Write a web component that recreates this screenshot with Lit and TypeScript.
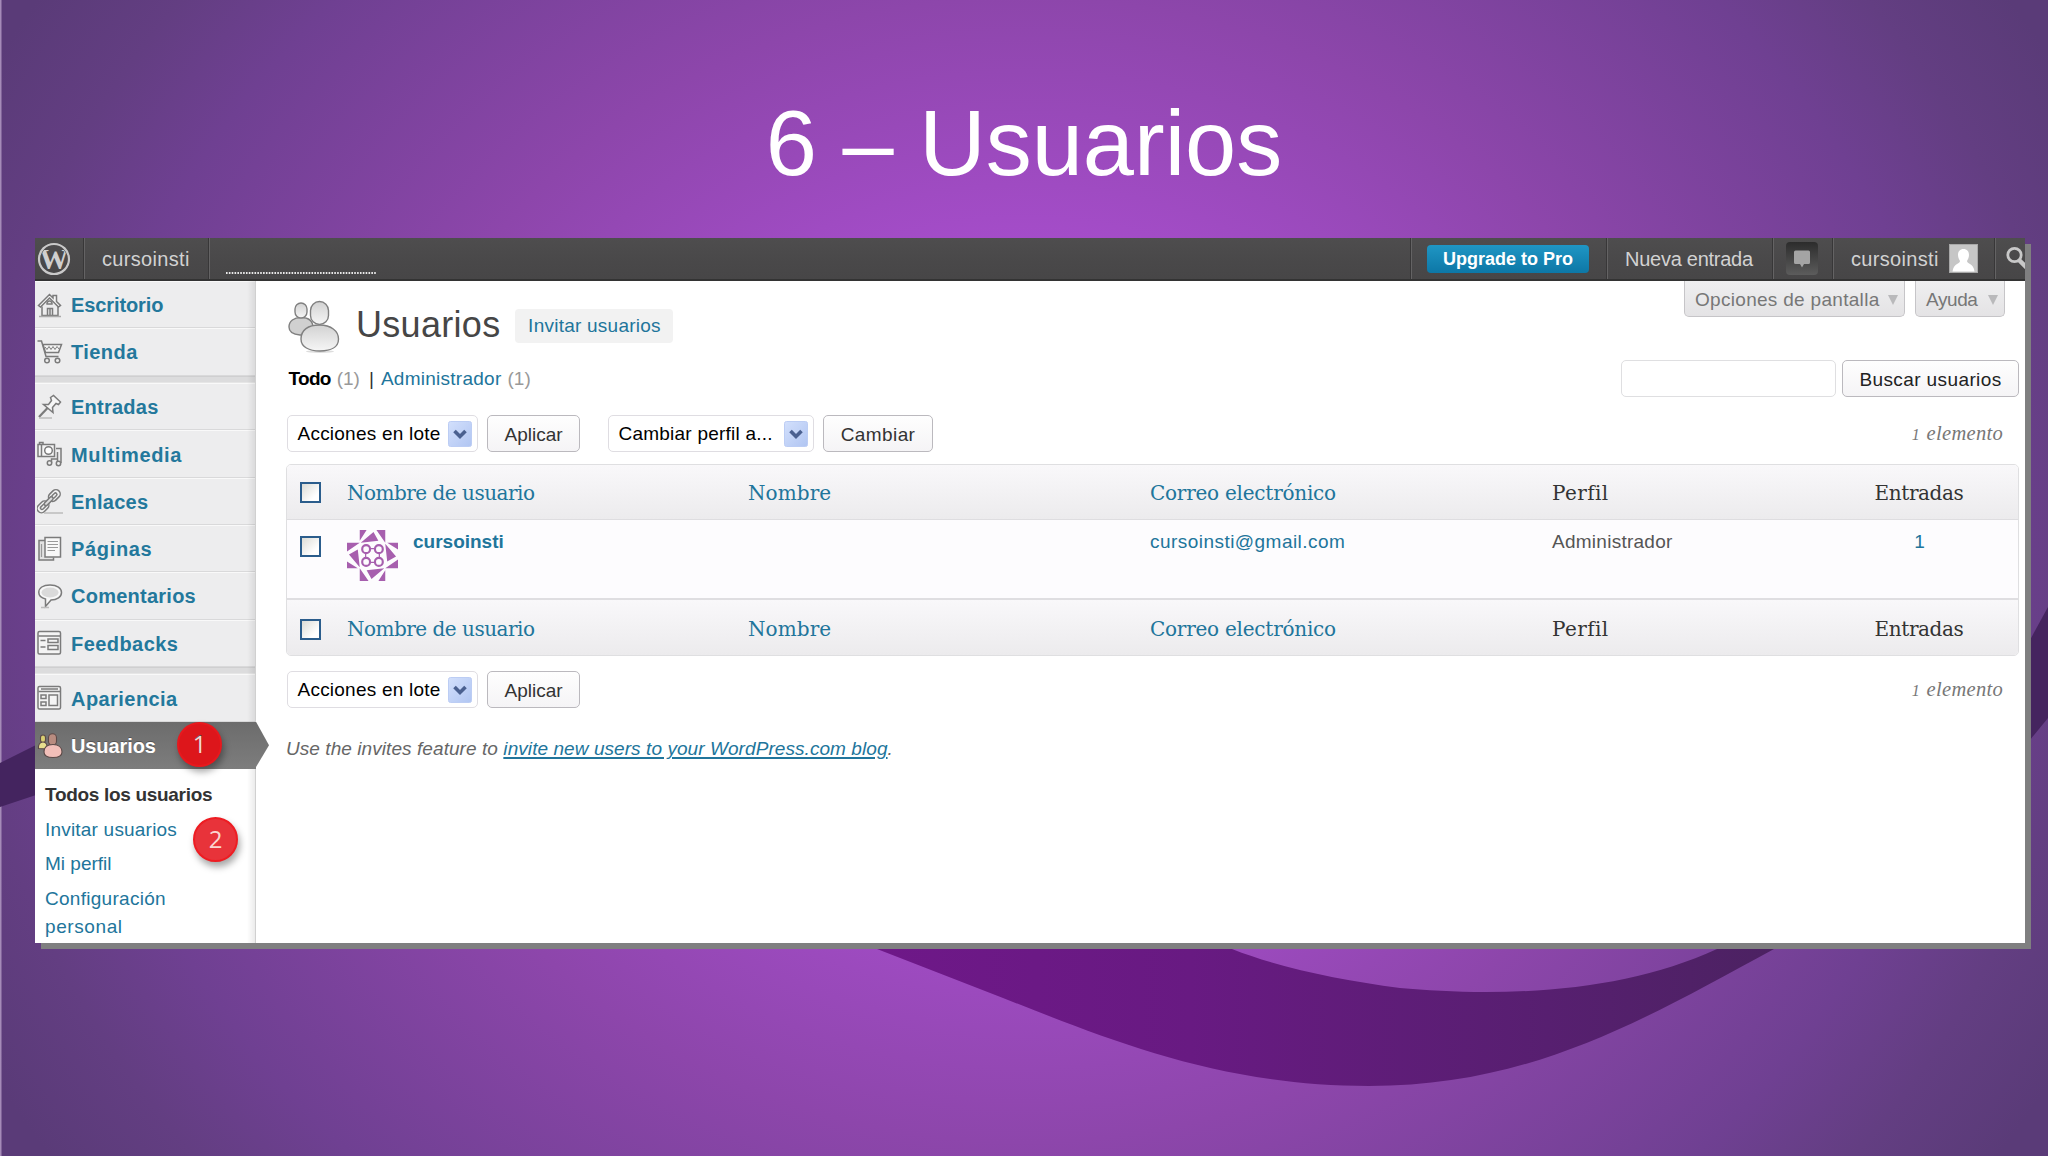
import { LitElement, html, css, svg, nothing } from "lit";
import { customElement, property } from "lit/decorators.js";

const ICONS: Record<string, unknown> = {
  home: svg`<path d="M1.5 13.5 L12.5 2.5 L16 6 V3.5 H19.5 V9.5 L23.5 13.5 L21.5 15 L12.5 6 L3.5 15 Z" fill="#f6f6f6"/><path d="M5 14.5 V23.5 H21 V14.5"/><path d="M10.5 23.5 V16.5 H15.5 V23.5 M13 17 V23"/><path d="M12.5 9 a2.5 2.5 0 0 1 2.5 3 h-5 a2.5 2.5 0 0 1 2.5 -3 Z"/><path d="M2 24.5 H24" stroke="#aaa"/>`,
  cart: svg`<path d="M0.5 2 H4.5 L9 17.5 H21.5"/><path d="M6 5.5 H24.5 L21.5 13.5 H8.5 Z" fill="#f4f4f4"/><path d="M8 8 L10 10.500 L12 7.500 L14 10.500 L16 7.500 L18 10.500 L20 7.500 L22 10" stroke-width="1"/><circle cx="10" cy="21.5" r="2.3" fill="#eee"/><circle cx="20.5" cy="21.5" r="2.3" fill="#eee"/>`,
  pin: svg`<path d="M13.5 3.5 L16.5 1.5 L23.5 8 L21.5 10.5 L19 9.5 L15.5 13.5 L16 18.5 L6.500 10.5 L11.500 10.500 L14.500 6.500 Z" fill="#f6f6f6"/><path d="M10.500 14 L2 23" stroke-width="2.200"/><path d="M2 24 H15" stroke="#bbb"/>`,
  media: svg`<rect x="1" y="3.500" width="16.500" height="12" fill="#f4f4f4"/><path d="M2.500 3.500 V1.500 H6 V3.500 M4.500 4 V15"/><circle cx="11.500" cy="9.500" r="3.800" fill="#fff"/><path d="M19 7.500 H24 V22 M14.500 22 V18 H20.500 M20.500 22 V11"/><circle cx="12.500" cy="22" r="2.200" fill="#eee"/><circle cx="21.500" cy="22.500" r="2.200" fill="#eee"/>`,
  link: svg`<g transform="rotate(-45 11.500 13)"><rect x="-3" y="9" width="13" height="8.500" rx="4.200" fill="#f2f2f2"/><rect x="0.500" y="11.800" width="6" height="3" rx="1.500"/><rect x="13" y="9" width="13" height="8.500" rx="4.200" fill="#f2f2f2"/><rect x="16.500" y="11.800" width="6" height="3" rx="1.500"/><rect x="6" y="11.500" width="11" height="3.500" rx="1.700" fill="#ddd"/></g><path d="M7 25 H26" stroke="#bbb"/>`,
  pages: svg`<path d="M8 4.500 H2 V24 H16.500 V21.500" fill="#e2e2e2"/><rect x="8" y="1.500" width="15.500" height="19.500" fill="#f8f8f8"/><path d="M10.500 5.500 H21 M10.500 8.500 H21 M10.500 11.500 H21 M10.500 14.500 H18 M4.500 8 V21" stroke="#999" stroke-width="1.200"/>`,
  comment: svg`<path d="M13 2 C20 2 24.500 5 24.500 9.500 C24.500 14 20 17 14 17 L8.500 23.500 L8.500 16 C4.500 15 1.800 12.800 1.800 9.500 C1.800 5 6 2 13 2 Z" fill="#f8f8f8"/><ellipse cx="13" cy="9.500" rx="8.500" ry="5" fill="#dadada" stroke="none"/><path d="M4 24.500 H12" stroke="#bbb"/>`,
  feedback: svg`<rect x="1" y="1.500" width="22.500" height="22.500" rx="1.500" fill="#f4f4f4"/><path d="M1.500 6 H23"/><path d="M3.500 10.500 H8.500 M3.500 17 H8.500"/><rect x="11" y="9" width="10" height="3.500"/><rect x="11" y="15.500" width="10" height="4"/>`,
  layout: svg`<rect x="1" y="1.500" width="22.500" height="22.500" rx="1.500" fill="#f4f4f4"/><path d="M1.500 6.500 H23 M4 4 H21" stroke-width="1.300"/><rect x="4" y="10" width="5" height="3.500"/><rect x="4" y="17" width="5" height="3.500"/><rect x="12" y="10" width="8.500" height="10.500"/>`,
  users: svg`<g stroke="#5c4a48" stroke-width="1.100"><rect x="3.500" y="2" width="5" height="7.500" rx="2.500" fill="#d9cf72"/><path d="M1.500 15.500 C1 11.500 3 9 6 9 C9.500 9 10.500 12 10 16 Z" fill="#e8df8e"/><rect x="11.500" y="0.800" width="8" height="11.500" rx="4" fill="#b98c80"/><path d="M7 19 C7 14 10.500 11.500 16 11.500 C21.500 11.500 25 14.500 25 19 C25 22.500 21.500 24.500 16 24.500 C10.500 24.500 7 22.500 7 19 Z" fill="#f2bfb9"/></g>`,
};

type Item = { icon: string; label: string; cls: string };
const MENU: Item[][] = [
  [
    { icon: "home", label: "Escritorio", cls: "s0" },
    { icon: "cart", label: "Tienda", cls: "s4" },
  ],
  [
    { icon: "pin", label: "Entradas", cls: "s2" },
    { icon: "media", label: "Multimedia", cls: "s6" },
    { icon: "link", label: "Enlaces", cls: "s2" },
    { icon: "pages", label: "Páginas", cls: "s6" },
    { icon: "comment", label: "Comentarios", cls: "s2" },
    { icon: "feedback", label: "Feedbacks", cls: "s4" },
  ],
  [{ icon: "layout", label: "Apariencia", cls: "s4" }],
];

@customElement("slide-backdrop")
class SlideBackdrop extends LitElement {
  static styles = css`
    :host { display: block; }
    svg { display: block; }
  `;
  render() {
    return html`<svg width="2048" height="1156" viewBox="0 0 2048 1156">
      <defs>
        <radialGradient id="bg" gradientUnits="userSpaceOnUse" cx="0" cy="0" r="1" gradientTransform="translate(1024 570) scale(1180 1040)">
          <stop offset="0" stop-color="#ad50d4" />
          <stop offset="0.3" stop-color="#a64dcb" />
          <stop offset="0.55" stop-color="#8d46ab" />
          <stop offset="0.8" stop-color="#6f4092" />
          <stop offset="0.9" stop-color="#633e82" />
          <stop offset="1" stop-color="#5a3b78" />
        </radialGradient>
        <linearGradient id="rib" gradientUnits="userSpaceOnUse" x1="880" y1="0" x2="1770" y2="0">
          <stop offset="0" stop-color="#6e1888" />
          <stop offset="0.35" stop-color="#681a82" />
          <stop offset="0.75" stop-color="#571f70" />
          <stop offset="1" stop-color="#4c2262" />
        </linearGradient>
      </defs>
      <rect width="2048" height="1156" fill="url(#bg)" />
      <rect width="1.500" height="1156" fill="#a58bb8" />
      <path fill="url(#rib)" d="M841 935 L877 949 L1003 998 C1110 1040 1220 1086 1369 1086 C1530 1086 1640 1022 1774 949 L1790 938 L1735 938 L1717 949 C1650 980 1570 992 1486 992 C1455 992 1425 990 1400 988 C1340 980 1280 968 1232 949 L1200 938 Z" />
      <path fill="#44245f" d="M0 763 L36 745 V795 L0 807 Z" />
      <path fill="#45245f" d="M2030 640 L2048 607 V718 L2030 740 Z" />
    </svg>`;
  }
}

@customElement("admin-bar")
class AdminBar extends LitElement {
  static styles = css`
    :host { display: block; }
    .bar {
      box-sizing: border-box; height: 43px; display: flex; align-items: stretch; overflow: hidden;
      background: linear-gradient(#4e4d4e, #494849 60%, #474647); border-bottom: 2px solid #333;
      color: #d2d2d2; font: 20px/41px "Liberation Sans", sans-serif; white-space: nowrap;
    }
    .cell { box-sizing: border-box; flex: none; display: flex; align-items: center; border-left: 1px solid #383738; box-shadow: inset 1px 0 0 #646364; }
    .cell.site, .cell.new { padding-top: 2px; }
    .logo { width: 48px; padding-left: 2px; display: flex; align-items: center; box-sizing: border-box; flex: none; }
    .site { width: 125px; padding-left: 18px; letter-spacing: 0.33px; }
    .stats { width: 1202px; padding-left: 17px; align-items: flex-end; }
    .dots { margin-bottom: 5px; }
    .up { width: 196px; padding-left: 16px; }
    .pro {
      box-sizing: border-box; width: 162px; height: 28px; text-align: center; border-radius: 4px; color: #fff;
      font: bold 18px/29px "Liberation Sans", sans-serif; background: linear-gradient(#1f96c4, #0d77a6);
    }
    .new { width: 166px; padding-left: 18px; letter-spacing: -0.26px; }
    .note { width: 60px; padding-left: 13px; }
    .me { width: 162px; padding-left: 18px; gap: 10px; letter-spacing: 0.33px; }
    .me span { padding-top: 2px; }
    .find { width: 34px; padding-left: 10px; }
    svg { display: block; flex: none; }
  `;
  render() {
    return html`<div class="bar">
      <div class="logo">
        <svg width="34" height="34" viewBox="0 0 34 34">
          <defs><clipPath id="disc"><circle cx="17" cy="17" r="13.300" /></clipPath></defs>
          <circle cx="17" cy="17" r="15" fill="none" stroke="#c9c9c9" stroke-width="2.200" />
          <text x="17" y="27" text-anchor="middle" font-family="Liberation Serif, serif" font-weight="bold" font-size="29" fill="#cfcfcf" clip-path="url(#disc)">W</text>
        </svg>
      </div>
      <div class="cell site">cursoinsti</div>
      <div class="cell stats">
        <svg class="dots" width="150" height="2" viewBox="0 0 150 2"><path d="M0 1 H150" stroke="#e8e8e8" stroke-width="2" stroke-dasharray="1.600 1.250" /></svg>
      </div>
      <div class="cell up"><div class="pro">Upgrade to Pro</div></div>
      <div class="cell new">Nueva entrada</div>
      <div class="cell note">
        <svg width="32" height="33" viewBox="0 0 32 33">
          <defs><linearGradient id="nb" x1="0" y1="0" x2="0" y2="1"><stop offset="0" stop-color="#2c2c2c" /><stop offset="1" stop-color="#5c5c5c" /></linearGradient></defs>
          <rect width="32" height="33" rx="4" fill="url(#nb)" />
          <path d="M9.500 8.500 H22.500 Q24 8.500 24 10 V20.500 Q24 22 22.500 22 H18 L16 25.500 L14 22 H9.500 Q8 22 8 20.500 V10 Q8 8.500 9.500 8.500 Z" fill="#a4a4a4" />
        </svg>
      </div>
      <div class="cell me">
        <span>cursoinsti</span>
        <svg width="29" height="29" viewBox="0 0 29 29">
          <rect x="0.500" y="0.500" width="28" height="28" fill="#c6c6c6" stroke="#a8a8a8" />
          <path d="M14.500 5 C18 5 20 7.500 20 11 C20 14 18.500 16 18 17 C18 20 24.500 19 25.500 27.500 H3.500 C4.500 19 11 20 11 17 C10.500 16 9 14 9 11 C9 7.500 11 5 14.500 5 Z" fill="#fff" />
        </svg>
      </div>
      <div class="cell find">
        <svg width="26" height="26" viewBox="0 0 26 26" fill="none" stroke="#c8c8c8">
          <circle cx="9.500" cy="9" r="6.700" stroke-width="2.800" /><path d="M14 14 L21.500 21.500" stroke-width="4.500" />
        </svg>
      </div>
    </div>`;
  }
}

@customElement("side-menu")
class SideMenu extends LitElement {
  static styles = css`
    :host { display: block; width: 221px; flex: none; }
    .side { position: relative; height: 100%; background: #ededee; display: flex; flex-direction: column; font-family: "Liberation Sans", sans-serif; }
    .edge { position: absolute; top: 0; right: 0; bottom: 0; width: 9px; background: linear-gradient(90deg, rgba(0,0,0,0), rgba(0,0,0,0.08)); border-right: 1px solid #d0d0d0; box-sizing: border-box; }
    .item {
      box-sizing: border-box; height: 47.300px; display: flex; align-items: center; gap: 7.500px; padding: 1px 0 0 1.500px;
      border-top: 1px solid #f9f9f9; border-bottom: 1px solid #d9d9da; color: #23789c; font-weight: bold; font-size: 20px; line-height: 24px;
    }
    .item svg { flex: none; fill: none; stroke: #7b7b7b; stroke-width: 1.500; }
    .gap { height: 7.500px; flex: none; box-sizing: border-box; background: #dcdcdd; border-top: 1px solid #cfcfd0; border-bottom: 1px solid #e6e6e6; }
    .s0 { letter-spacing: -0.1px; }
    .s2 { letter-spacing: 0.25px; }
    .s4 { letter-spacing: 0.44px; }
    .s6 { letter-spacing: 0.66px; }
    .current { position: relative; z-index: 1; background: linear-gradient(#6c6c6c, #7d7d7d); border: 0; padding-top: 2px; color: #fff; text-shadow: 0 -1px 0 #555; }
    .arrow { position: absolute; left: 221px; top: 0; width: 13px; height: 100%; background: linear-gradient(#6c6c6c, #7d7d7d); clip-path: polygon(0 0, 100% 50%, 0 96%); }
    .badge {
      position: absolute; z-index: 2; width: 45px; height: 45px; box-sizing: border-box; border-radius: 50%; background: #dd161b; border: 2px solid #e8181d;
      color: #fbd5d0; font: 24px/40px "Open Sans", sans-serif; text-align: center; box-shadow: 2px 5px 7px rgba(0,0,0,0.35);
    }
    .one { left: 142px; top: 0; }
    .two { left: 158px; top: 536px; background: #e8333a; border-color: #ee1c22; }
    .sub { flex: 1; background: #fff; padding: 12px 0 0 10px; display: flex; flex-direction: column; gap: 6.700px; color: #21759b; font-size: 19px; line-height: 28px; }
    .all { color: #333; font-weight: bold; letter-spacing: -0.31px; }
    .inv { letter-spacing: 0.2px; }
    .conf { letter-spacing: 0.28px; }
    .pers { letter-spacing: 0.6px; }
  `;
  row(i: Item) {
    return html`<div class="item"><svg width="27" height="27" viewBox="0 0 27 27">${ICONS[i.icon]}</svg><span class="${i.cls}">${i.label}</span></div>`;
  }
  render() {
    return html`<div class="side">
      ${MENU.map((g, n) => html`${n ? html`<div class="gap"></div>` : nothing}${g.map((i) => this.row(i))}`)}
      <div class="item current">
        <svg width="27" height="27" viewBox="0 0 27 27">${ICONS.users}</svg><span class="s0">Usuarios</span>
        <div class="arrow"></div>
        <div class="badge one">1</div>
      </div>
      <div class="sub">
        <div class="all">Todos los usuarios</div>
        <div class="inv">Invitar usuarios</div>
        <div>Mi perfil</div>
        <div><div class="conf">Configuración</div><div class="pers">personal</div></div>
      </div>
      <div class="badge two">2</div>
      <div class="edge"></div>
    </div>`;
  }
}

@customElement("select-box")
class SelectBox extends LitElement {
  @property() label = "";
  static styles = css`
    :host { display: block; }
    .box {
      box-sizing: border-box; height: 37px; border: 1.500px solid #dfdde2; border-radius: 5px; background: #fff; color: #000;
      display: flex; align-items: center; justify-content: space-between; padding: 0 5px 0 9.500px;
      font: 19px/22px "Liberation Sans", sans-serif; letter-spacing: 0.23px; white-space: nowrap;
    }
    svg { display: block; }
  `;
  render() {
    return html`<div class="box"><span>${this.label}</span>
      <svg width="24" height="26" viewBox="0 0 24 26">
        <defs><linearGradient id="g" x1="0" y1="0" x2="1" y2="1"><stop offset="0" stop-color="#d3e0fc" /><stop offset="1" stop-color="#b0c5f2" /></linearGradient></defs>
        <rect x="0.500" y="0.500" width="23" height="25" rx="2" fill="url(#g)" stroke="#bccdf4" />
        <path d="M6.500 10 L12 15.500 L17.500 10" fill="none" stroke="#4a6090" stroke-width="3.600" />
      </svg></div>`;
  }
}

const rot = (n: number) => `rotate(${n * 90} 26 26)`;

@customElement("users-screen")
class UsersScreen extends LitElement {
  static styles = css`
    :host { display: block; flex: 1; min-width: 0; }
    .main { box-sizing: border-box; padding: 0 6px 0 30px; font: 19px/22px "Liberation Sans", sans-serif; color: #555; white-space: nowrap; }
    .top { height: 79px; display: flex; justify-content: space-between; align-items: flex-start; padding-right: 14px; }
    .heading { display: flex; align-items: center; padding: 19px 0 0 1px; height: 53px; }
    .title { margin: 0 0 3px 16px; font: 36px/42px "Liberation Sans", sans-serif; letter-spacing: 0.3px; color: #464646; }
    .invite { box-sizing: border-box; width: 158px; height: 34px; margin: 0 0 2px 15px; text-align: center; border-radius: 4px; background: #f2f2f2; color: #21759b; line-height: 34px; letter-spacing: 0.24px; }
    .tabs { display: flex; gap: 10px; }
    .tab {
      box-sizing: border-box; height: 36px; border: 1.500px solid #c6c5c8; border-top: 0; border-radius: 0 0 5px 5px; background: linear-gradient(#efeff0, #e4e3e5);
      color: #777; display: flex; align-items: center; justify-content: space-between; padding: 2px 6px 0 10px; letter-spacing: 0.3px;
    }
    .wide { width: 221px; }
    .help { width: 90px; letter-spacing: -0.4px; }
    .tri { width: 0; height: 0; border: 5.500px solid transparent; border-top: 10px solid #b9b9bb; border-bottom: 0; }
    .row { height: 37px; display: flex; align-items: center; justify-content: space-between; }
    .filters { display: flex; padding-left: 2.500px; }
    .todo { color: #000; font-weight: bold; letter-spacing: -0.7px; }
    .count { color: #999; margin-left: 6px; }
    .bar { color: #333; margin: 0 7px 0 9px; }
    .link { color: #21759b; }
    .admin { letter-spacing: 0.26px; }
    .search { display: flex; gap: 6px; }
    .input { box-sizing: border-box; width: 215px; height: 37px; border: 1.500px solid #dfdfe1; border-radius: 5px; background: #fff; }
    .button {
      box-sizing: border-box; height: 37px; border: 1.500px solid #bbb9be; border-radius: 5px; background: linear-gradient(#fefefe, #f5f4f6);
      color: #333; text-align: center; line-height: 37px;
    }
    .b-search { width: 177px; letter-spacing: 0.4px; color: #222; }
    .b-apply { width: 93px; }
    .b-change { width: 110px; letter-spacing: 0.42px; }
    .nav { margin-top: 18px; padding-right: 16px; }
    .actions { display: flex; gap: 9px; padding-left: 1px; }
    .sel1 { width: 191px; }
    .sel2 { width: 206px; margin-left: 19px; }
    .total { font: italic 20.500px/22px "Liberation Serif", serif; color: #777; letter-spacing: 0.3px; }
    .old { font-size: 16px; margin-right: 1px; }
    .table { box-sizing: border-box; margin-top: 12px; border: 1.500px solid #dfdfe1; border-radius: 5px; overflow: hidden; height: 192px; display: flex; flex-direction: column; }
    .tr { display: grid; grid-template-columns: 60px 401px 402px 402px 267px 1fr; box-sizing: border-box; }
    .head { height: 55px; flex: none; align-items: center; padding-top: 1px; background: linear-gradient(#f9f8fa, #ecebed); font: 20px/24px "DejaVu Serif", serif; color: #333; }
    .first { border-bottom: 1.500px solid #dedde0; }
    .last { padding-top: 3px; }
    .body { flex: 1; align-items: start; background: #fdfcfe; padding-top: 10px; border-bottom: 2px solid #dfdee1; }
    .check { margin-left: 12.500px; width: 21px; height: 21px; box-sizing: border-box; border: 2px solid #2b5d8c; background: linear-gradient(135deg, #dcdcd6, #fff 75%); }
    .body .check { margin-top: 6px; }
    .n { letter-spacing: -0.5px; }
    .m { letter-spacing: 0.1px; }
    .c { letter-spacing: -0.24px; }
    .p { letter-spacing: 0.4px; }
    .e { letter-spacing: -0.39px; text-align: center; padding-left: 1px; }
    .user { display: flex; gap: 15px; }
    .name { color: #21759b; font-weight: bold; }
    .cell { padding-top: 1px; }
    .mail { letter-spacing: 0.46px; }
    .num { text-align: center; padding-left: 2px; }
    .bottom { margin-top: 15px; padding-right: 16px; }
    .hint { margin-top: 30px; font-style: italic; color: #666; letter-spacing: 0.07px; }
    .under { color: #21759b; text-decoration: underline; text-decoration-thickness: 1.500px; text-underline-offset: 2px; }
    svg { display: block; flex: none; }
  `;
  head(cls: string) {
    return html`<div class="tr head ${cls}">
      <div class="check"></div><span class="link n">Nombre de usuario</span><span class="link m">Nombre</span>
      <span class="link c">Correo electrónico</span><span class="p">Perfil</span><span class="e">Entradas</span>
    </div>`;
  }
  total() {
    return html`<span class="total"><span class="old">1</span> elemento</span>`;
  }
  render() {
    return html`<div class="main">
      <div class="top">
        <div class="heading">
          <svg width="53" height="54" viewBox="0 0 53 54" stroke="#808080" stroke-width="1.400">
            <defs><linearGradient id="u" x1="0" y1="0" x2="0" y2="1"><stop offset="0" stop-color="#d2d2d2" /><stop offset="1" stop-color="#f6f6f6" /></linearGradient></defs>
            <ellipse cx="33" cy="51.500" rx="14" ry="1.500" fill="#ddd" stroke="none" />
            <path d="M2 27 C2 21 7 17.500 14 17.500 C22 17.500 26 21 26 28 C26 33 20 35.500 13 35 C6 34.500 2 32 2 27 Z" fill="#d0d0d0" />
            <rect x="8" y="3" width="12" height="15" rx="6" fill="url(#u)" />
            <path d="M14 39 C14 30 21 25 32.500 25 C44 25 51.500 31 51.500 39 C51.500 47 44 51 33 51 C22 51 14 47 14 39 Z" fill="url(#u)" />
            <rect x="23.500" y="1.500" width="18" height="23" rx="9" fill="url(#u)" />
          </svg>
          <h1 class="title">Usuarios</h1>
          <div class="invite">Invitar usuarios</div>
        </div>
        <div class="tabs">
          <div class="tab wide">Opciones de pantalla<span class="tri"></span></div>
          <div class="tab help">Ayuda<span class="tri"></span></div>
        </div>
      </div>
      <div class="row">
        <div class="filters"><span class="todo">Todo</span><span class="count">(1)</span><span class="bar">|</span><span class="link admin">Administrador</span><span class="count">(1)</span></div>
        <div class="search"><div class="input"></div><div class="button b-search">Buscar usuarios</div></div>
      </div>
      <div class="row nav">
        <div class="actions">
          <select-box class="sel1" label="Acciones en lote"></select-box>
          <div class="button b-apply">Aplicar</div>
          <select-box class="sel2" label="Cambiar perfil a..."></select-box>
          <div class="button b-change">Cambiar</div>
        </div>
        ${this.total()}
      </div>
      <div class="table">
        ${this.head("first")}
        <div class="tr body">
          <div class="check"></div>
          <div class="user">
            <svg width="51" height="51" viewBox="0 0 52 52" fill="#a75fae">
              ${[0, 1, 2, 3].map(
                (n) => svg`<g transform=${rot(n)}>
                  <path d="M13 0 H20 L13 11 Z M30 0 H39 V13 Z M14 13 L27 2 L32 11 Z" />
                  <circle cx="19.500" cy="19.500" r="4" fill="none" stroke="#a75fae" stroke-width="2.200" />
                  <path d="M23 19 H29" stroke="#a75fae" stroke-width="1.200" />
                </g>`
              )}
            </svg>
            <span class="name cell">cursoinsti</span>
          </div>
          <span></span>
          <span class="link mail cell">cursoinsti@gmail.com</span>
          <span class="admin cell">Administrador</span>
          <span class="link num cell">1</span>
        </div>
        ${this.head("last")}
      </div>
      <div class="row bottom">
        <div class="actions">
          <select-box class="sel1" label="Acciones en lote"></select-box>
          <div class="button b-apply">Aplicar</div>
        </div>
        ${this.total()}
      </div>
      <div class="hint">Use the invites feature to <span class="under">invite new users to your WordPress.com blog</span>.</div>
    </div>`;
  }
}

@customElement("app-root")
class AppRoot extends LitElement {
  static styles = css`
    :host { display: block; width: 2048px; height: 1156px; overflow: hidden; }
    .slide { position: relative; height: 1156px; }
    .back { position: absolute; inset: 0; }
    .content { position: relative; display: flex; flex-direction: column; align-items: flex-start; }
    .caption { box-sizing: border-box; width: 2048px; height: 238px; margin: 0; padding-top: 90px; text-align: center; color: #fff; font: 92px/106px "Liberation Sans", sans-serif; }
    .window { width: 1990px; height: 705px; margin-left: 35px; background: #fff; box-shadow: 6px 6px 0 #7f7f80; display: flex; flex-direction: column; }
    .panes { flex: 1; display: flex; min-height: 0; }
  `;
  render() {
    return html`<div class="slide">
      <slide-backdrop class="back"></slide-backdrop>
      <div class="content">
        <h1 class="caption">6 – Usuarios</h1>
        <div class="window">
          <admin-bar></admin-bar>
          <div class="panes"><side-menu></side-menu><users-screen></users-screen></div>
        </div>
      </div>
    </div>`;
  }
}
